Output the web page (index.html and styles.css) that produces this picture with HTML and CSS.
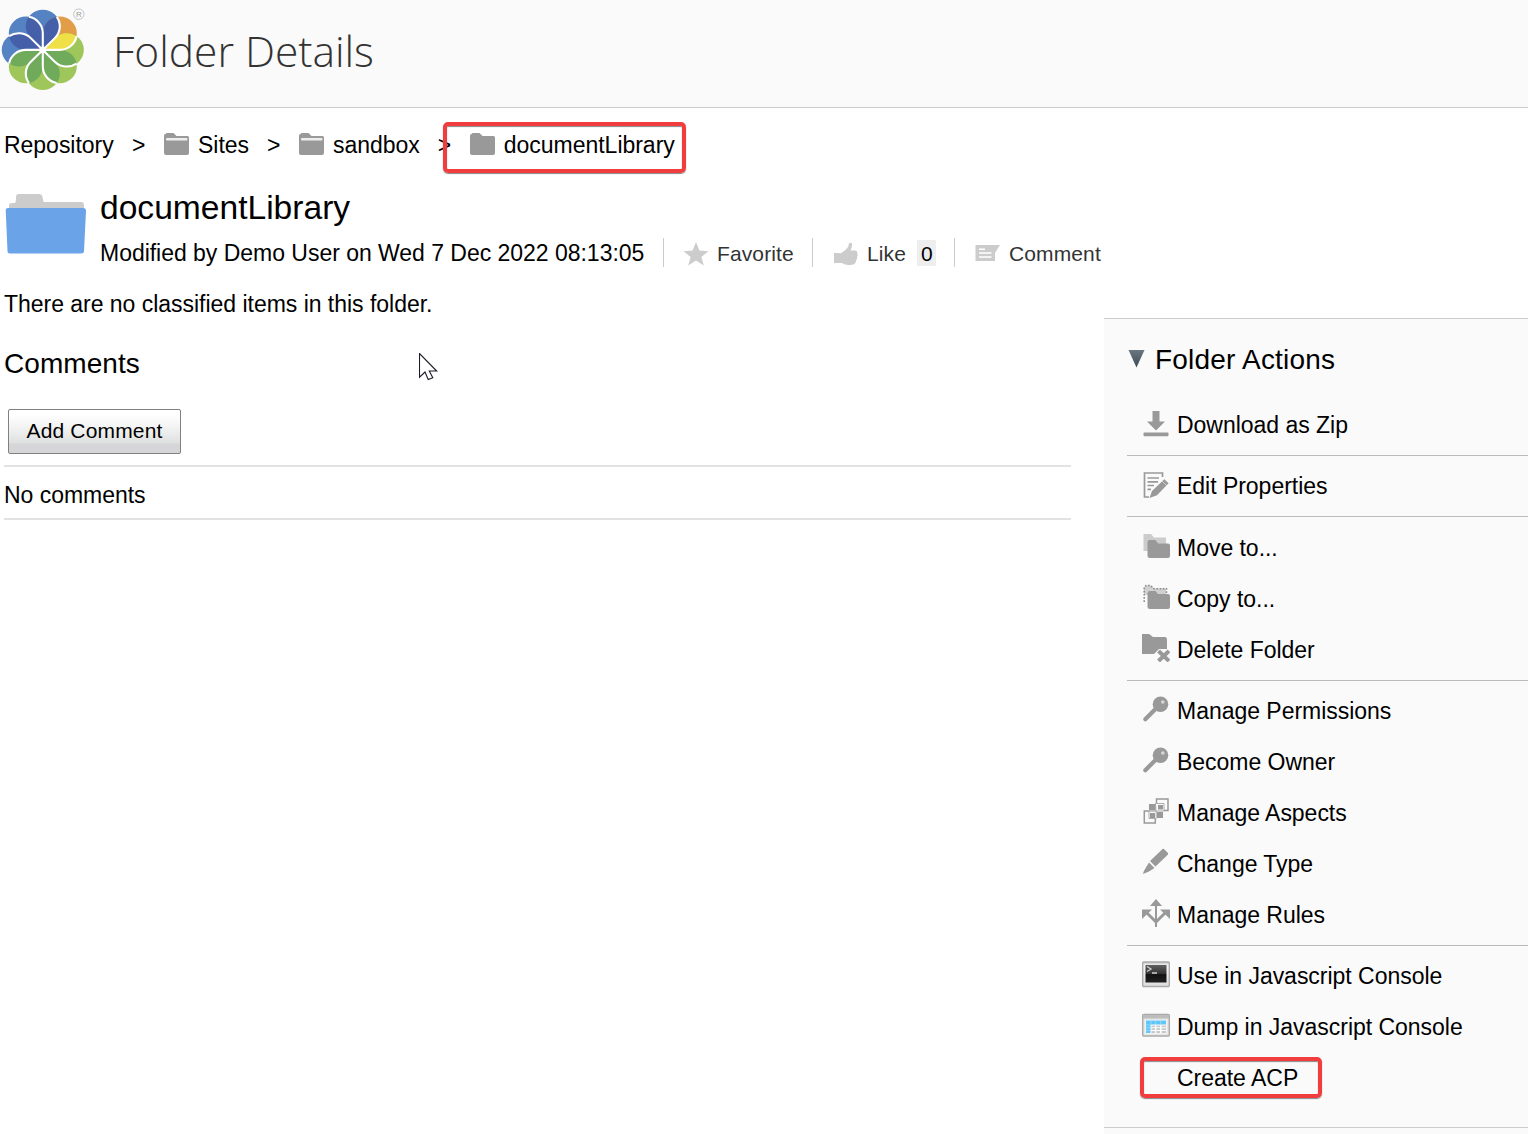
FILE: index.html
```html
<!DOCTYPE html>
<html lang="en">
<head>
<meta charset="utf-8">
<title>Folder Details</title>
<link rel="stylesheet" href="styles.css">
</head>
<body>
<svg class="defs" width="0" height="0">
  <defs>
    <path id="petal" d="M0 0L12 -12A17 17 0 1 0 -12 -12Z"/>
    <path id="lens" d="M0 0L12 -12A17 17 0 0 0 14 -33.7A17 17 0 0 0 0 -17Z"/>
    <path id="edge" d="M0 0L12 -12A17 17 0 0 0 14 -33.7" fill="none" stroke="#fff" stroke-width="2.1"/>
    <path id="folder" d="M0 2.5Q0 1 1.5 1L2.5 0H9.5L12.5 3H23.5Q25 3 25 4.5V20Q25 22 23 22H2Q0 22 0 20Z"/>
    <g id="key"><circle cx="18.5" cy="8.3" r="7.8"/><path d="M14 12.5L3.3 23.3" stroke="#999" stroke-width="4.2" stroke-linecap="round"/><circle cx="20.8" cy="6" r="1.8" fill="#d8d8d8"/></g>
    <linearGradient id="frame" x2="0" y2="1"><stop stop-color="#c8c8c8"/><stop offset=".15" stop-color="#f4f4f4"/><stop offset="1" stop-color="#dedede"/></linearGradient>
    <linearGradient id="screen" x2="0" y2="1"><stop stop-color="#606060"/><stop offset=".5" stop-color="#333"/><stop offset=".55" stop-color="#111"/><stop offset="1" stop-color="#222"/></linearGradient>
    <linearGradient id="arrow" x2="0" y2="1"><stop stop-color="#6b7780"/><stop offset="1" stop-color="#3c4854"/></linearGradient>
  </defs>
</svg>

<header class="header">
  <svg class="logo" width="90" height="96" viewBox="0 0 90 96">
    <g transform="translate(42.8 49.9) scale(1 .98)">
      <g fill="#5482c3"><use href="#petal"/><use href="#petal" transform="rotate(-45)"/><use href="#petal" transform="rotate(-90)"/></g>
      <use href="#petal" transform="rotate(45)" fill="#e19d47"/>
      <g fill="#9fc65a"><use href="#petal" transform="rotate(90)"/><use href="#petal" transform="rotate(135)"/><use href="#petal" transform="rotate(180)"/><use href="#petal" transform="rotate(225)"/></g>
      <g fill="#4560a8"><use href="#lens"/><use href="#lens" transform="rotate(-45)"/><use href="#lens" transform="rotate(-90)"/></g>
      <use href="#lens" transform="rotate(45)" fill="#f0e048"/>
      <g fill="#70aa5b"><use href="#lens" transform="rotate(90)"/><use href="#lens" transform="rotate(135)"/><use href="#lens" transform="rotate(180)"/><use href="#lens" transform="rotate(225)"/></g>
      <use href="#edge"/><use href="#edge" transform="rotate(45)"/><use href="#edge" transform="rotate(90)"/><use href="#edge" transform="rotate(135)"/><use href="#edge" transform="rotate(180)"/><use href="#edge" transform="rotate(225)"/><use href="#edge" transform="rotate(270)"/><use href="#edge" transform="rotate(315)"/>
      <circle r="3.4" fill="#fff"/>
    </g>
    <circle cx="78.8" cy="14.2" r="5.2" fill="none" stroke="#c4c4c4"/>
    <text x="76" y="17.2" class="mark">R</text>
  </svg>
  <h1 class="page-title">Folder Details</h1>
</header>

<nav class="breadcrumb">
  <span class="crumb root">Repository</span><span class="sep">&gt;</span>
  <span class="crumb"><svg width="26" height="23" viewBox="0 0 26 23" fill="#999"><use href="#folder"/><rect x="2" y="5" width="21.5" height="2.5" rx="1" fill="#eee"/></svg>Sites</span><span class="sep">&gt;</span>
  <span class="crumb"><svg width="26" height="23" viewBox="0 0 26 23" fill="#999"><use href="#folder"/><rect x="2" y="5" width="21.5" height="2.5" rx="1" fill="#eee"/></svg>sandbox</span><span class="sep">&gt;</span>
  <span class="crumb current"><svg width="26" height="23" viewBox="0 0 26 23" fill="#999"><use href="#folder"/></svg>documentLibrary</span>
</nav>

<section class="node">
  <svg class="node-icon" width="82" height="62" viewBox="0 0 82 62">
    <path d="M4 16V12Q4 9 7 9H10Q11 8 11 3Q11 0 14 0H34Q37 0 37.5 3L38.5 8H76Q79 8 79 11V18H4Z" fill="#ccc"/>
    <path d="M.7 16Q.7 14 3 14H78Q81 14 81 17L79 57Q79 59.5 76 59.5H5Q2.5 59.5 2.5 57Z" fill="#6ba3e8"/>
  </svg>
  <div class="node-info">
    <h2 class="node-name">documentLibrary</h2>
    <div class="meta">
      <span class="modified">Modified by Demo User on Wed 7 Dec 2022 08:13:05</span>
      <span class="social fav"><svg width="26" height="26" viewBox="0 0 26 26"><path d="M13 1L16.4 9.5L25.5 10.2L18.4 15.9L20.8 24.5L13 19.6L5.2 24.5L7.6 15.9L.5 10.2L9.6 9.5Z" fill="#ccc"/></svg>Favorite</span>
      <span class="social like"><svg width="26" height="26" viewBox="0 0 26 26"><path d="M1 12.5Q1 11.4 3 12L8 12.2Q13 9.5 15.2 5.8L16 2.5Q17 1 19 2.2Q19.5 5 17.5 9.5H22Q24.8 9.8 24.3 12.5Q25.2 14 24 16Q24.6 18 23 19.5Q23 22.5 20 23.5Q13 25 9 22H3Q1 23 1 21Z" fill="#ccc"/></svg>Like<b class="count">0</b></span>
      <span class="social comm"><svg width="26" height="26" viewBox="0 0 26 26"><path d="M.5 4H25L20 12V20H.5Z" fill="#ccc"/><path d="M4 8.3H10M4 12H16.5M4 16H16.5" stroke="#fff" stroke-width="1.5"/></svg>Comment</span>
    </div>
  </div>
</section>

<div class="columns">
  <main class="content">
    <p class="classified">There are no classified items in this folder.</p>
    <h3 class="comments-title">Comments</h3>
    <button class="add" type="button">Add Comment</button>
    <div class="no-comments">No comments</div>
  </main>
  <aside class="actions">
    <h3 class="actions-title"><svg width="17" height="18" viewBox="0 0 17 18"><path d="M.5 0H16.5L8.5 17.5Z" fill="url(#arrow)"/></svg>Folder Actions</h3>
    <ul class="group">
      <li class="action"><svg class="icon" viewBox="0 0 28 28" fill="#999"><path d="M10.5 1H17.5V11.5H23L14 20.5L5 11.5H10.5Z"/><rect x="1.5" y="22.5" width="25" height="3.8" rx="1"/></svg>Download as Zip</li>
    </ul>
    <ul class="group">
      <li class="action"><svg class="icon" viewBox="0 0 28 28" fill="none" stroke="#999"><path d="M20.5 6V2H2.5V26H7" stroke-width="1.7"/><path d="M5.5 7H17M5.5 10.8H16M5.5 14.5H12M5.5 18.3H9" stroke-width="1.7"/><path d="M22.3 8.2L26.6 12.2L15 24.2L7.5 27L10 20Z" fill="#999" stroke="none"/><path d="M20.2 10.2L24.4 14.2" stroke="#fafafa" stroke-width=".6"/></svg>Edit Properties</li>
    </ul>
    <ul class="group three">
      <li class="action"><svg class="icon" viewBox="0 0 28 28"><path d="M1.5 1H9L12 4.5H24V18H1.5Z" fill="#ccc"/><path d="M5.5 9Q5.5 7 7.5 7H13.5L16 10.5H26Q28 10.5 28 12.5V23Q28 25 26 25H8Q5.5 25 5.5 22.5Z" fill="#999"/></svg>Move to...</li>
      <li class="action"><svg class="icon" viewBox="0 0 28 28"><path d="M2 17V4L4 1.5H8.5L12 4.5H24V11H2Z" fill="#d0d0d0"/><path d="M2.2 18V3.5L4 1.5H8.5L12 4.7H24.5V10" fill="none" stroke="#8b8b8b" stroke-width="1.5" stroke-dasharray="1.7 1.5"/><path d="M5.5 9.5Q5.5 7 7.5 7H13.5L16 10H26Q28 10 28 12V23Q28 25 26 25H8Q5.5 25 5.5 22.5Z" fill="#999"/></svg>Copy to...</li>
      <li class="action"><svg class="icon up" viewBox="0 0 28 28"><path d="M0 0H7L11 3H23Q25 3 25 6V15H17L12 20H0Z" fill="#999"/><path d="M16.5 17L27 27M27 17L16.5 27" stroke="#999" stroke-width="4"/></svg>Delete Folder</li>
    </ul>
    <ul class="group">
      <li class="action"><svg class="icon" viewBox="0 0 28 28" fill="#999"><use href="#key"/></svg>Manage Permissions</li>
      <li class="action"><svg class="icon" viewBox="0 0 28 28" fill="#999"><use href="#key"/></svg>Become Owner</li>
      <li class="action"><svg class="icon up" viewBox="0 0 28 28" fill="none" stroke="#999"><path d="M14.5 6V2H26V13.5H22M7 14H2.3V26H13.3V22" stroke-width="1.5"/><path d="M7 7H13.5V13.5H7ZM16 8H21V12.5H16ZM8 16H13V21H8ZM15 15H21V21H15Z" fill="#999" stroke="none"/><path d="M13.5 6.5H22V14H14.2V21.5H7V14.2H14Z" stroke-width=".8"/></svg>Manage Aspects</li>
      <li class="action"><svg class="icon up" viewBox="0 0 28 28" fill="#999"><path d="M18 3.5L20.5 1Q21.5 .5 22.5 1.5L26 5Q26.5 6 25.5 7L13.5 18.5L8 13Z"/><path d="M7 14.5L12.5 20L7 23.5L1 26Q1.5 23 4.5 18.5Z"/></svg>Change Type</li>
      <li class="action"><svg class="icon up" viewBox="0 0 28 28" fill="#999"><path d="M14 0L20 7H8Z"/><path d="M14 4V28" stroke="#999" stroke-width="2"/><path d="M4 13L14 23L24 13" fill="none" stroke="#999" stroke-width="3"/><path d="M0 10.5H10L0 20ZM28 10.5H18L28 20Z"/></svg>Manage Rules</li>
    </ul>
    <ul class="group last">
      <li class="action"><svg class="icon" viewBox="0 0 28 28"><rect x=".7" y="1" width="26.6" height="24.5" rx="1" fill="url(#frame)" stroke="#aaa" stroke-width="1.4"/><rect x="3.5" y="4" width="21" height="17.5" fill="url(#screen)"/><path d="M5 5.5L9 8L5 10.5M10 12H15" fill="none" stroke="#d0d0d0" stroke-width="1.3"/></svg>Use in Javascript Console</li>
      <li class="action"><svg class="icon" viewBox="0 0 28 28"><rect x=".7" y="2.5" width="26.6" height="21.5" rx="1" fill="#e6e6e6" stroke="#aaa" stroke-width="1.4"/><path d="M1 3H27V6.5H1Z" fill="#bdbdbd"/><rect x="3.5" y="8" width="21" height="13.5" fill="#fff"/><path d="M4 8.5H24V12.5H8.5V21H4Z" fill="#5fc6f5"/><path d="M9.5 13.5H13V15.3H9.5ZM14.3 13.5H18V15.3H14.3ZM19.5 13.5H24V15.3H19.5ZM9.5 16.2H13V18H9.5ZM14.3 16.2H18V18H14.3ZM19.5 16.2H24V18H19.5ZM9.5 19H13V21H9.5ZM14.3 19H18V21H14.3ZM19.5 19H24V21H19.5Z" fill="#c5c9cc"/><path d="M4 13H8M4 15.8H8M4 18.5H8M9 9V12M13.7 9V12M18.7 9V12" stroke="#b5e5fb" stroke-width=".6"/></svg>Dump in Javascript Console</li>
      <li class="action marked"><span class="icon"></span>Create ACP</li>
    </ul>
  </aside>
</div>

<svg class="cursor" width="20" height="30" viewBox="0 0 20 30"><path d="M.5 .5V24.2L6 19L9.2 26.5L13.8 24.8L10.3 18H17.7Z" fill="#fff" stroke="#1c1c28" stroke-width="1.1"/></svg>
</body>
</html>
```
FILE: styles.css
```css
*, *::before, *::after { box-sizing: border-box; }
body {
  margin: 0;
  height: 1134px;
  overflow: hidden;
  position: relative;
  background: #fff;
  color: #000;
  font: 23px/28px "Liberation Sans", Arial, sans-serif;
  letter-spacing: -0.025px;
}
h1, h2, h3, p, ul { margin: 0; padding: 0; font-weight: normal; list-style: none; }
svg { flex: none; display: block; }
.defs { position: absolute; }

.header { height: 108px; display: flex; background: #fafafa; border-bottom: 1px solid #ccc; }
.logo { width: 90px; }
.mark { font: 8px "Liberation Sans", Arial, sans-serif; fill: #999; }
.page-title {
  margin: 21px 0 0 23px;
  font: 300 42.5px/60px "Open Sans", sans-serif;
  color: #333;
  white-space: nowrap;
}

.breadcrumb { display: flex; height: 75px; padding-left: 4px; white-space: nowrap; }
.crumb { display: flex; height: 28px; margin-top: 23px; position: relative; }
.crumb svg { margin: 2px 8px 0 0; }
.root { width: 110px; }
.sep { width: 50px; padding-left: 18px; margin-top: 23px; }
.current::after, .marked::after {
  content: "";
  position: absolute;
  border: 4px solid #f23d3f;
  border-radius: 5px;
  box-shadow: 0 1px 1px #888, inset 0 1px 1px #888;
}
.current::after { left: -27px; top: -9px; width: 243px; height: 51px; }

.node { display: flex; height: 99px; padding-left: 5px; }
.node-icon { margin: 11px 13px 0 0; }
.node-name { font-size: 33.6px; line-height: 40px; padding-top: 5px; letter-spacing: 0; }
.meta { display: flex; align-items: center; height: 30px; margin-top: 9px; white-space: nowrap; }
.modified { width: 563px; margin-top: 1px; }
.social {
  display: flex;
  align-items: center;
  height: 29px;
  padding-top: 4px;
  border-left: 1px solid #ccc;
  color: #333;
  font-size: 21px;
  letter-spacing: .12px;
}
.fav { width: 149px; padding-left: 19px; }
.fav svg { margin-right: 8px; }
.like { width: 142px; padding-left: 20px; }
.like svg { margin-right: 8px; }
.comm { padding-left: 20px; }
.comm svg { margin-right: 8px; }
.count { margin: 0 0 2px 11px; padding-left: 4px; width: 19px; height: 26px; line-height: 27px; background: #eee; color: #000; font-weight: normal; }

.columns { display: flex; height: 852px; }
.content { width: 1071px; padding-left: 4px; margin-right: 33px; }
.classified { padding-top: 8px; }
.comments-title { font-size: 28px; line-height: 32px; margin-top: 30px; letter-spacing: .06px; }
.add {
  display: block;
  width: 173px;
  height: 45px;
  margin: 29px 0 11px 4px;
  padding: 0 0 2px;
  border: 1px solid #808080;
  border-radius: 2px;
  background: linear-gradient(#fff 10%, #f5f5f5 35%, #e0e2e2 75%, #d6d6d8 80%, #d6d6d8);
  font: 21px/26px "Liberation Sans", Arial, sans-serif;
  letter-spacing: .16px;
  color: #000;
}
.no-comments { height: 55px; border: solid #e2e2e2; border-width: 2px 0; padding-top: 14px; }

.actions { flex: 1; margin-top: 36px; padding-left: 23px; background: #fafafa; border-top: 1px solid #ccc; white-space: nowrap; }
.actions-title { display: flex; height: 76px; padding: 25px 0 0 1px; font-size: 28px; line-height: 32px; letter-spacing: .2px; }
.actions-title svg { margin: 6px 10px 0 0; }
.group { padding: 5px 0 4px 15px; border-bottom: 1px solid #bbb; }
.three { padding-top: 6px; }
.action { display: flex; height: 51px; padding-top: 11px; position: relative; }
.icon { width: 28px; height: 28px; margin: -1px 7px 0 0; }
.icon.up { margin-top: -2px; }
.last { margin-left: -23px; padding-left: 38px; padding-bottom: 23px; border-color: #ccc; }
.marked::after { left: -2px; top: 4px; width: 182px; height: 41px; }

.cursor { position: absolute; left: 419px; top: 353px; }
```
